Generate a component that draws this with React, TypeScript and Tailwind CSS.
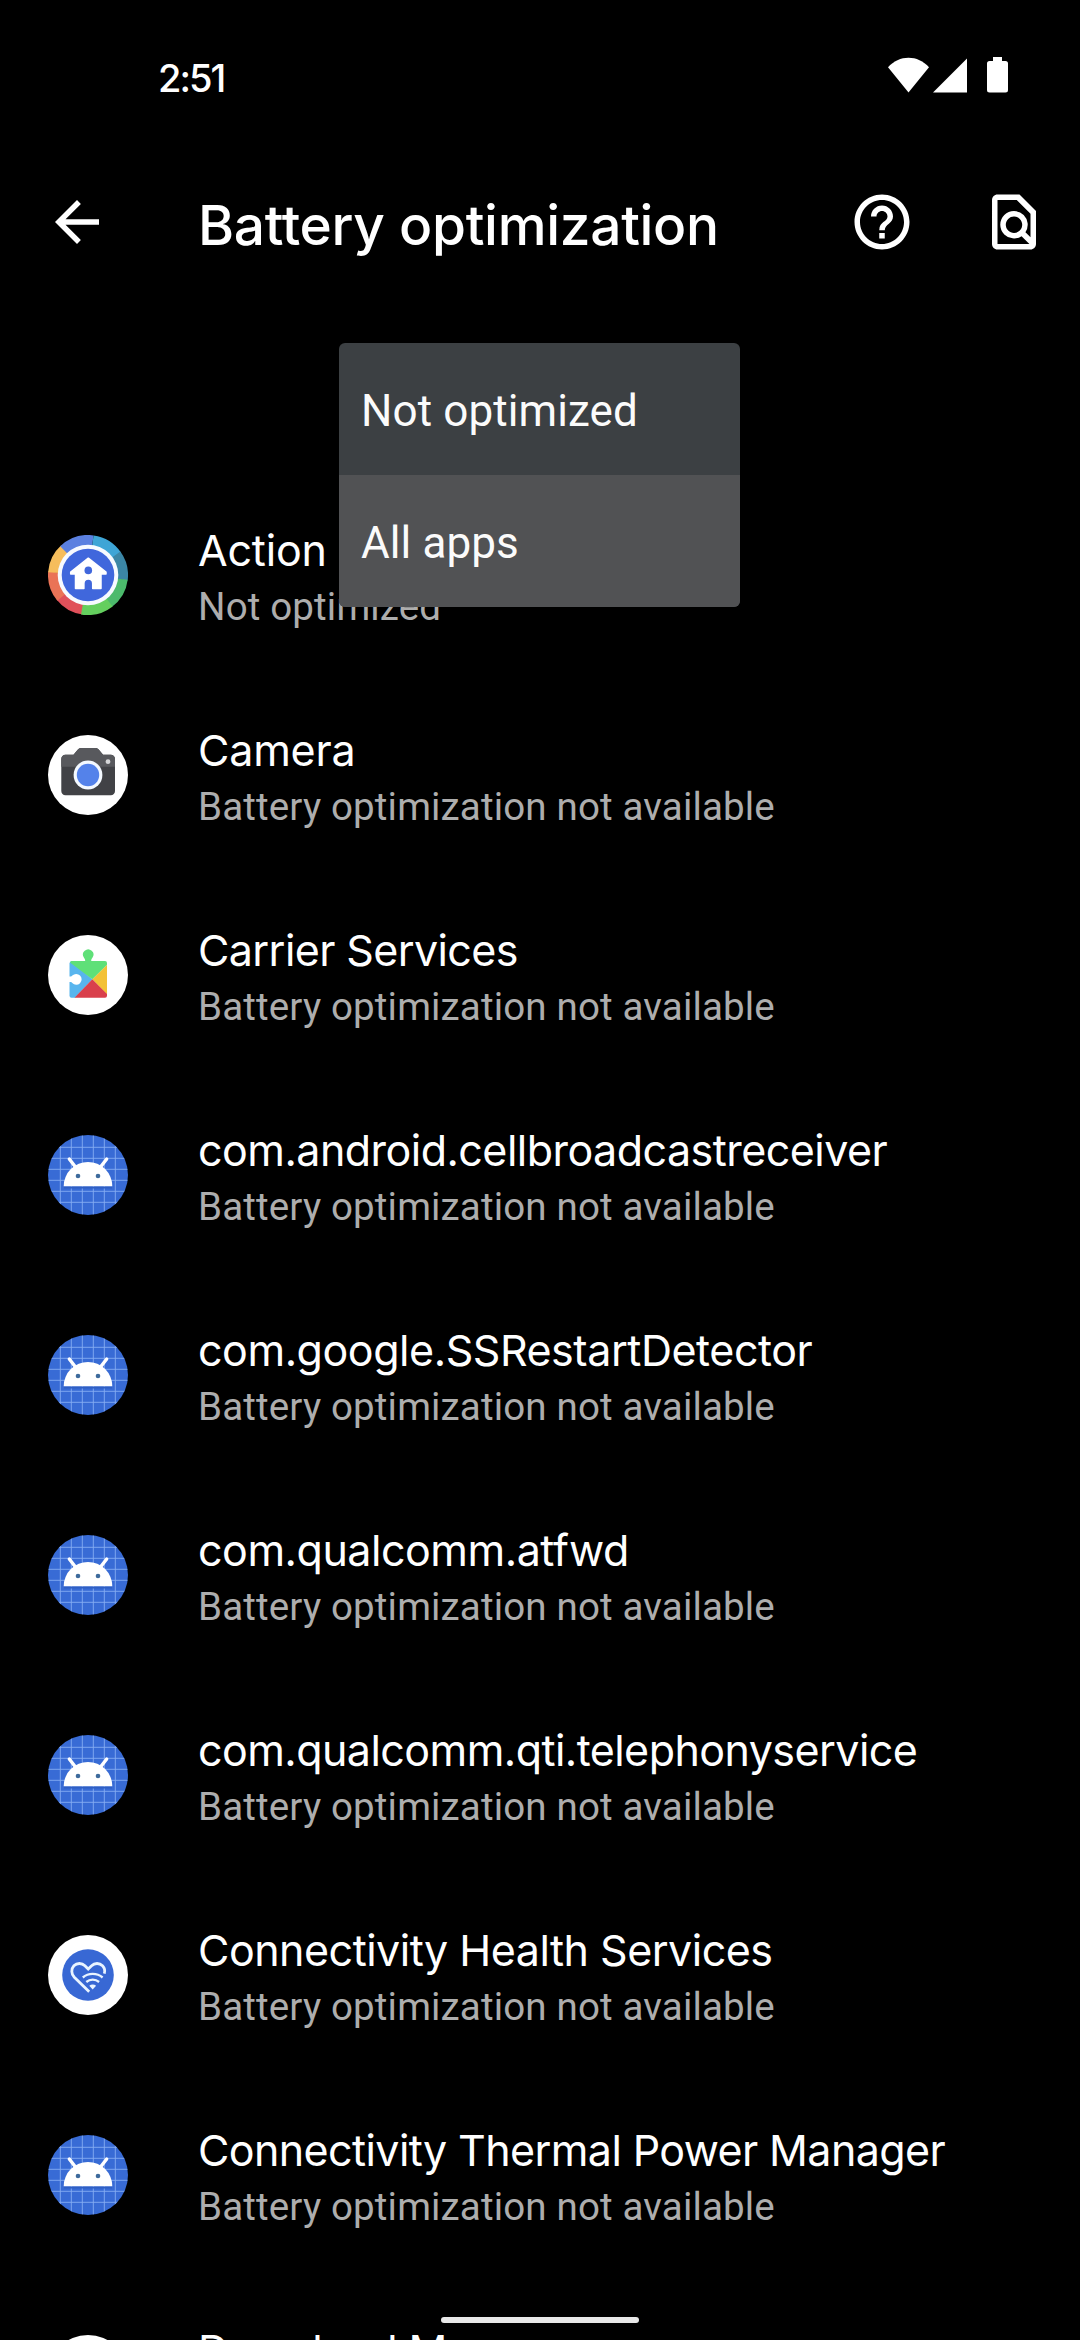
import type { ReactNode } from 'react';
import { MdArrowBack, MdHelpOutline, MdOutlineFindInPage } from 'react-icons/md';

interface AppEntry {
  name: string;
  status: string;
  icon: ReactNode;
  tracking: string;
}

const RING_SEGMENTS = [
  { from: 188, to: 232, color: '#e0505a' },
  { from: 230, to: 275, color: '#ea7356' },
  { from: 274, to: 318, color: '#f6bd5c' },
  { from: 316, to: 368, color: '#5b80e0' },
  { from: 8, to: 56, color: '#3ea5d6' },
  { from: 54, to: 98, color: '#3b86a6' },
  { from: 97, to: 144, color: '#4cba6c' },
  { from: 142, to: 190, color: '#64cf5e' },
];

const ringPoint = (deg: number) => {
  const a = (deg * Math.PI) / 180;
  return `${(40 + 34 * Math.sin(a)).toFixed(2)} ${(40 - 34 * Math.cos(a)).toFixed(2)}`;
};

const ActionIcon = () => (
  <svg viewBox="0 0 80 80" className="w-20 h-20">
    {RING_SEGMENTS.map(s => (
      <path
        key={s.from}
        d={`M${ringPoint(s.from)}A34 34 0 0 1 ${ringPoint(s.to)}`}
        fill="none"
        stroke={s.color}
        strokeWidth="12"
      />
    ))}
    <circle cx="40" cy="40" r="30.3" fill="#f7faff" />
    <circle cx="40" cy="40" r="26.3" fill="#4067dc" />
    <path
      fill="#fff"
      stroke="#fff"
      strokeWidth="1.5"
      strokeLinejoin="round"
      d="M40.3 23.2 58 37v2h-5v14.6h-8.3v-5.2a4.4 4.4 0 0 0-8.8 0v5.2h-8.4V39h-4.8v-2z"
    />
    <circle cx="40.3" cy="35.4" r="3.8" fill="#4067dc" />
  </svg>
);

const CameraIcon = () => (
  <svg viewBox="0 0 80 80" className="w-20 h-20">
    <circle cx="40" cy="40" r="40" fill="#fff" />
    <path d="M17.5 19.8h8l4.2-5c1-1.2 2-1.7 3.5-1.7h14.2c1.5 0 2.5.5 3.5 1.7l4.2 5h7.7c2.4 0 4.2 1.8 4.2 4.2v32c0 2.4-1.8 4.2-4.2 4.2H17.5c-2.4 0-4.2-1.8-4.2-4.2V24c0-2.4 1.8-4.2 4.2-4.2z" fill="#414246" />
    <path d="M17.5 19.8h8l4.2-5c1-1.2 2-1.7 3.5-1.7h14.2c1.5 0 2.5.5 3.5 1.7l4.2 5h7.7c2.4 0 4.2 1.8 4.2 4.2v7.7H13.3V24c0-2.4 1.8-4.2 4.2-4.2z" fill="#58595d" />
    <circle cx="40" cy="40" r="14.4" fill="#f4f9ff" />
    <circle cx="40" cy="40" r="11.2" fill="#5482ea" />
    <circle cx="60" cy="26.7" r="2.4" fill="#d5d6d8" />
  </svg>
);

const PuzzleIcon = () => (
  <svg viewBox="0 0 80 80" className="w-20 h-20">
    <circle cx="40" cy="40" r="40" fill="#fff" />
    <path d="M23 26 44.3 44.3 27 62.7h-3.5a2 2 0 0 1-2-2V28z" fill="#58b5ee" />
    <path d="M59 29.7 44.3 44.3 59 59.5z" fill="#f3c136" />
    <path d="M26.5 62.7 44.3 44.3 59 59v1.7a2 2 0 0 1-2 2z" fill="#d9404c" />
    <path d="M22 27.5c.4-.9 1-1.5 2-1.5h13.2c0-1.6-.6-2.3-1.2-3.2a5.2 5.2 0 1 1 8.4 0c-.7.9-1.2 1.6-1.2 3.2H57a2 2 0 0 1 2 2v1.7L44.3 44.3z" fill="#5fe078" />
    <path d="M20 41.5h2.6c.8 0 1.2-.3 1.7-.9a5.4 5.4 0 1 1 0 7.4c-.5-.6-.9-.9-1.7-.9H20z" fill="#fff" />
  </svg>
);

const AndroidIcon = () => (
  <svg viewBox="0 0 80 80" className="w-20 h-20">
    <clipPath id="disc">
      <circle cx="40" cy="40" r="40" />
    </clipPath>
    <g clipPath="url(#disc)">
      <rect width="80" height="80" fill="#386bd5" />
      {[12.3, 23.3, 34.3, 45.3, 56.3, 67.3].map(p => (
        <path key={p} d={`M${p} 0V80M0 ${p}H80`} stroke="#86adf3" strokeWidth="0.9" />
      ))}
    </g>
    <path d="M16 52.5h48" stroke="#2f5fc4" strokeWidth="2" />
    <path d="M15.7 51.2a24.3 24.3 0 0 1 48.6 0z" fill="#fff" />
    <path d="m21.3 24 6.2 8M58.7 24l-6.2 8" stroke="#fff" strokeWidth="3.4" strokeLinecap="round" />
    <circle cx="30" cy="41" r="2.3" fill="#3d6a9c" />
    <circle cx="50" cy="41" r="2.3" fill="#3d6a9c" />
  </svg>
);

const HealthIcon = () => (
  <svg viewBox="0 0 80 80" className="w-20 h-20">
    <circle cx="40" cy="40" r="40" fill="#fff" />
    <circle cx="40" cy="40" r="25.8" fill="#3868d4" />
    <g fill="none" stroke="#e9f4ff" strokeWidth="2.8">
      <path d="M41.2 56.8 26.3 42.2c-3.2-3.3-3.3-8.2-.4-11.4 3-3.1 8-3.1 11 0l3.3 3.3 3.4-3.3c3-3.1 7.9-3.1 10.9 0 2.2 2.3 2.7 5 1.8 7.9" />
      <path d="M34.8 42.5c5.6-4.8 14.2-4.8 19.8 0" strokeWidth="2.4" />
      <path d="M38.3 47c3.7-3.1 9.1-3.1 12.8 0" strokeWidth="2.3" />
    </g>
    <path d="M41.3 50.7c2-1.6 4.8-1.6 6.8 0l-3.4 3.7z" fill="#e9f4ff" />
  </svg>
);

const DownloadIcon = () => (
  <svg viewBox="0 0 80 80" className="w-20 h-20">
    <circle cx="40" cy="40" r="40" fill="#fff" />
  </svg>
);

const NOT_AVAILABLE = 'Battery optimization not available';

const apps: AppEntry[] = [
  { name: 'Action', status: 'Not optimized', icon: <ActionIcon />, tracking: 'tracking-[-0.2px]' },
  { name: 'Camera', status: NOT_AVAILABLE, icon: <CameraIcon />, tracking: 'tracking-[-0.2px]' },
  { name: 'Carrier Services', status: NOT_AVAILABLE, icon: <PuzzleIcon />, tracking: 'tracking-[-0.6px]' },
  { name: 'com.android.cellbroadcastreceiver', status: NOT_AVAILABLE, icon: <AndroidIcon />, tracking: 'tracking-[-0.53px]' },
  { name: 'com.google.SSRestartDetector', status: NOT_AVAILABLE, icon: <AndroidIcon />, tracking: 'tracking-[-0.45px]' },
  { name: 'com.qualcomm.atfwd', status: NOT_AVAILABLE, icon: <AndroidIcon />, tracking: 'tracking-[-0.47px]' },
  { name: 'com.qualcomm.qti.telephonyservice', status: NOT_AVAILABLE, icon: <AndroidIcon />, tracking: 'tracking-[-0.55px]' },
  { name: 'Connectivity Health Services', status: NOT_AVAILABLE, icon: <HealthIcon />, tracking: 'tracking-[-0.5px]' },
  { name: 'Connectivity Thermal Power Manager', status: NOT_AVAILABLE, icon: <AndroidIcon />, tracking: 'tracking-[-0.6px]' },
  { name: 'Download Manager', status: NOT_AVAILABLE, icon: <DownloadIcon />, tracking: 'tracking-[-0.6px]' },
];

const StatusBar = () => (
  <div className="flex items-start justify-between h-[156px] pl-[158px] pr-[72px] pt-[57px]">
    <span className="text-[38px] leading-[42px] font-medium tracking-[-2px]">2:51</span>
    <svg viewBox="0 0 120 36" className="w-[120px] h-9" fill="#fff">
      <path d="M0 10.3C11-2.5 30-2.5 41 10.3L20.5 35.5z" />
      <path d="M45 35.5 79 1.5v34z" />
      <path d="M105 0h9v4h3.5q2.500 0 2.500 2.500V33q0 2.500-2.500 2.500h-16Q99 35.500 99 33V6.500q0-2.500 2.500-2.500h3.500z" />
    </svg>
  </div>
);

const Toolbar = () => (
  <div className="flex items-center h-[132px] pl-11 pr-[33px]">
    <MdArrowBack className="w-[66px] h-[66px] shrink-0" />
    <h1 className="flex-1 pl-[88px] pt-1.5 text-[55px] leading-[64px] font-medium tracking-[-0.3px] whitespace-nowrap">Battery optimization</h1>
    <div className="flex gap-[66px]">
      <MdHelpOutline className="w-[66px] h-[66px]" />
      <MdOutlineFindInPage className="w-[66px] h-[66px]" />
    </div>
  </div>
);

const FilterMenu = () => (
  <div className="absolute left-[339px] top-[343px] w-[401px] rounded-md overflow-hidden bg-[#3c4043] font-[Roboto,sans-serif] text-[44px] tracking-[0.1px] text-[#fbfbfb]">
    <div className="h-[132px] flex items-center pl-[22px] pt-[3px]">Not optimized</div>
    <div className="h-[132px] flex items-center pl-[22px] pt-[3px] bg-[#515254]">All apps</div>
  </div>
);

const AppRow = ({ app }: { app: AppEntry }) => (
  <div className="flex h-[200px] shrink-0 pl-12">
    <div className="pt-[60px]">{app.icon}</div>
    <div className="pt-[49px] pl-[70px] whitespace-nowrap">
      <div className={`text-[43px] leading-[52px] ${app.tracking}`}>{app.name}</div>
      <div className="font-[Roboto,sans-serif] text-[38.5px] leading-[44px] tracking-[0.16px] pt-[9px] text-[#adadad]">{app.status}</div>
    </div>
  </div>
);

const App = () => (
  <div className="relative w-[1080px] h-[2340px] overflow-hidden bg-black text-white font-[Inter,sans-serif]">
    <StatusBar />
    <Toolbar />
    <div className="flex flex-col pt-[187px]">
      {apps.map(app => (
        <AppRow key={app.name} app={app} />
      ))}
    </div>
    <FilterMenu />
    {/* gesture handle */}
    <div className="absolute left-[441px] top-[2317px] w-[198px] h-1.5 rounded-full bg-[#e8e8e8]" />
  </div>
);

export default App;
